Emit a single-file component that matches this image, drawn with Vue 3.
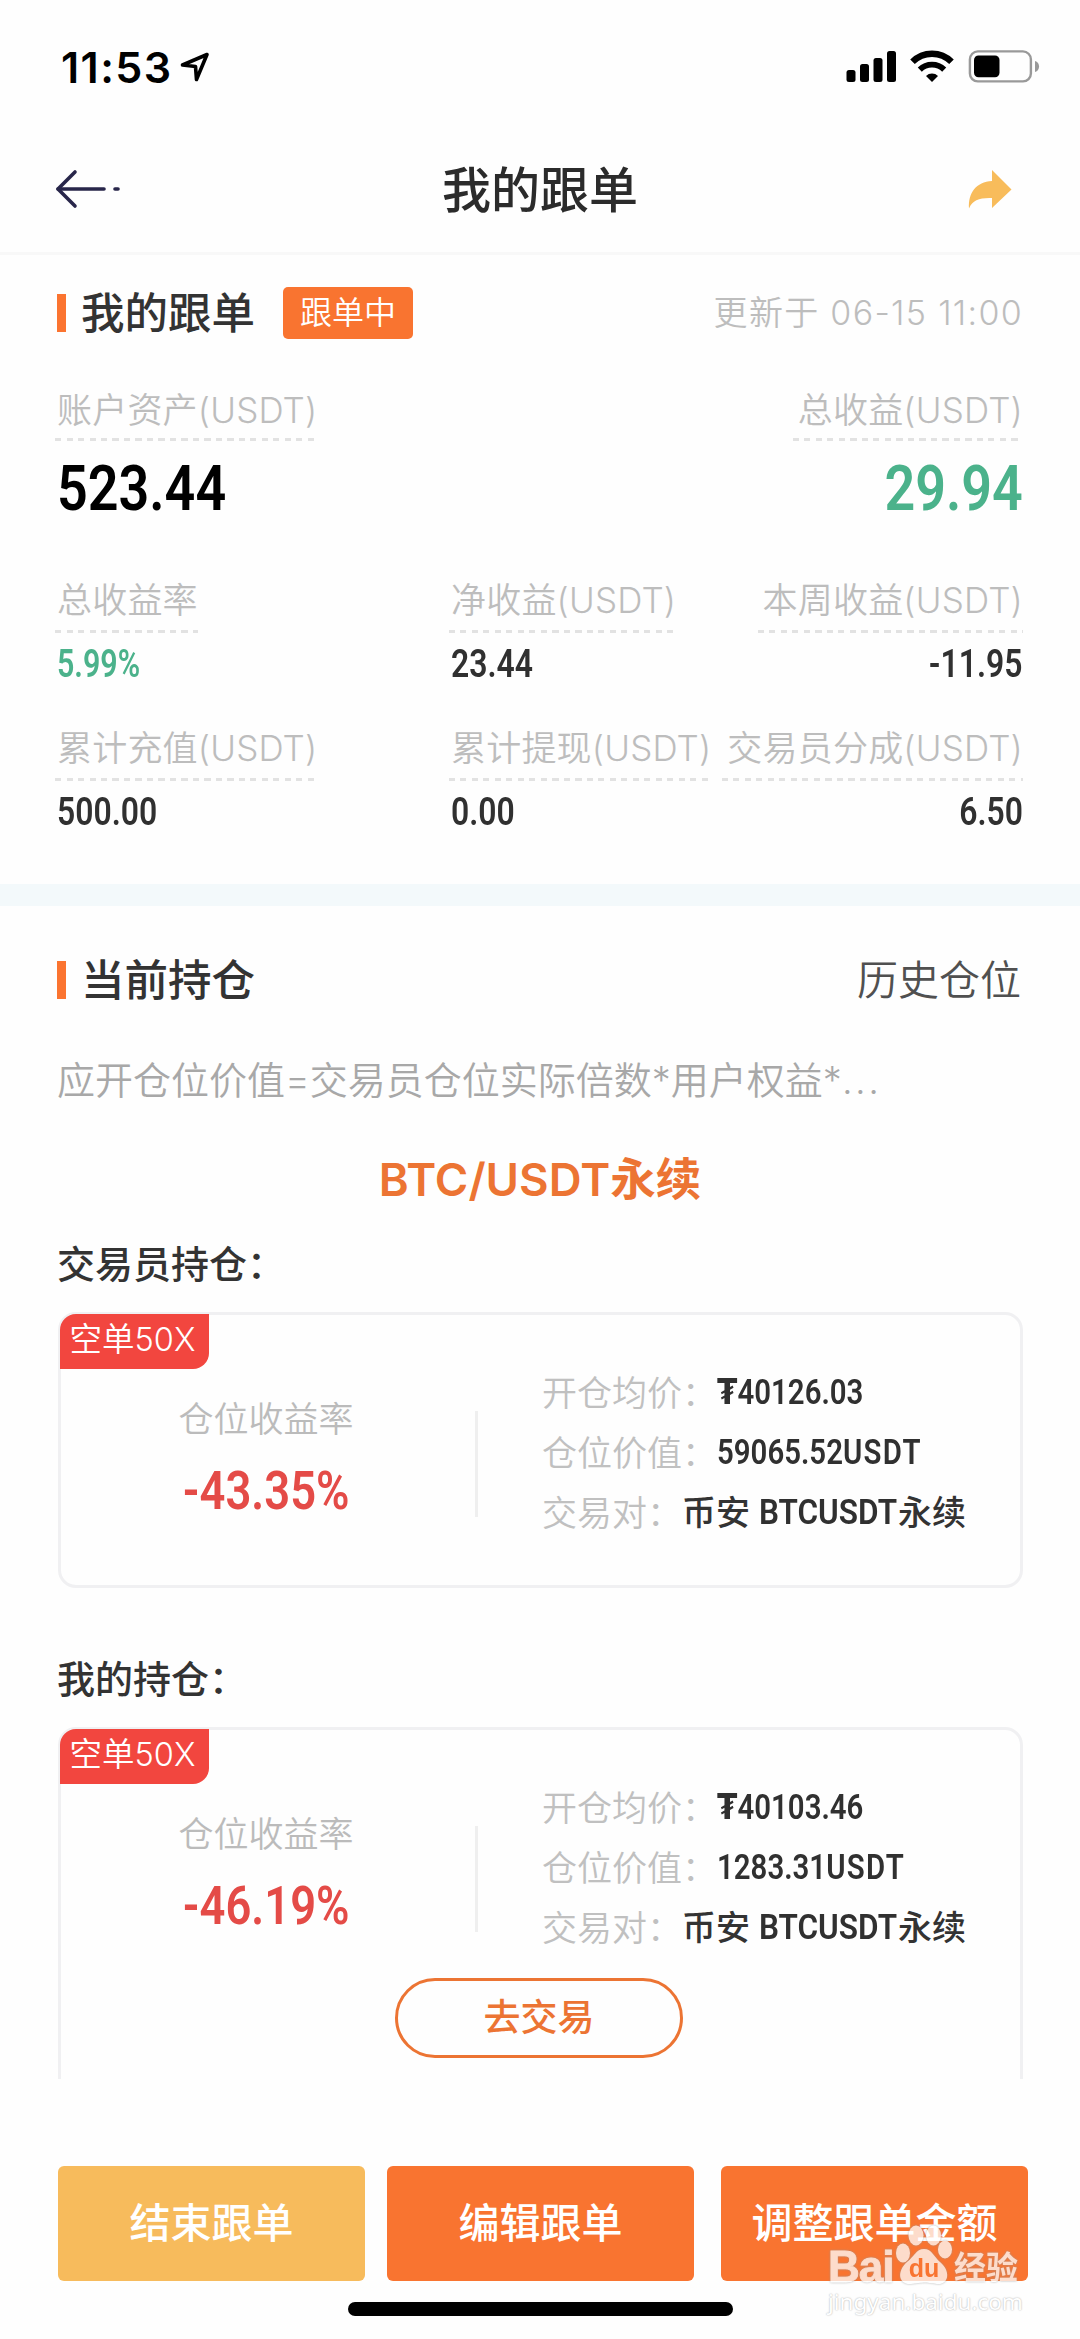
<template>
  <div class="page">
    <div class="status">
      <div class="clock">
        <span class="time">11:53</span>
        <svg class="loc" width="30" height="30" viewBox="0 0 30 30">
          <path d="M2.5 13 L27 2.500 L16.500 27.500 L15.500 14.500 Z" fill="none" stroke="#000" stroke-width="3.6" stroke-linejoin="round" />
        </svg>
      </div>
      <svg class="sys" width="194" height="34" viewBox="0 0 194 34">
        <rect x="0.5" y="20" width="9" height="12" rx="2.5" />
        <rect x="14" y="14" width="9" height="18" rx="2.5" />
        <rect x="27.5" y="8" width="9" height="24" rx="2.5" />
        <rect x="41" y="1" width="9" height="31" rx="2.5" />
        <path d="M66.5 11.8 A27.5 27.5 0 0 1 105.5 11.8" fill="none" stroke="#000" stroke-width="6.4" />
        <path d="M73.8 19.6 A17.5 17.5 0 0 1 98.2 19.6" fill="none" stroke="#000" stroke-width="5.8" />
        <path d="M86 32 L80 26 A8.6 8.6 0 0 1 92 26 Z" />
        <rect x="123.9" y="1.4" width="61" height="30" rx="8" fill="none" stroke="#999" stroke-width="2.4" />
        <rect x="128" y="5.5" width="25.5" height="21.8" rx="4.5" />
        <path d="M189 11 C194.4 12.4 194.4 20.6 189 22 Z" fill="#999" />
      </svg>
    </div>

    <header class="nav">
      <svg width="68" height="40" viewBox="0 0 68 40" fill="none" stroke="#28264a" stroke-width="3.6" stroke-linecap="round" stroke-linejoin="round">
        <path d="M20 3 L3 20 L20 37" />
        <path d="M3 20 H49" />
        <path d="M60 20 H63" />
      </svg>
      <h1>我的跟单</h1>
      <svg class="share" width="44" height="40" viewBox="0 0 44 40" fill="#f8bc5b">
        <path d="M24 1 L43.5 20.5 L24 39 V29 C12 28.5 4.500 31 1 39.500 C0 24 8 13 24 12 Z" />
      </svg>
    </header>

    <section class="summary">
      <div class="heading">
        <i class="bar"></i>
        <h2>我的跟单</h2>
        <span class="tag">跟单中</span>
        <span class="updated">更新于 06-15 11:00</span>
      </div>

      <div class="totals">
        <div v-for="t in totals" :key="t.label" class="stat">
          <span class="label">{{ t.label }}</span>
          <b class="din big" :class="t.tone">{{ t.value }}</b>
        </div>
      </div>

      <div class="stats">
        <div v-for="s in stats" :key="s.label" class="stat">
          <span class="label">{{ s.label }}</span>
          <b class="din" :class="s.tone">{{ s.value }}</b>
        </div>
      </div>
    </section>

    <section class="positions">
      <div class="heading">
        <i class="bar"></i>
        <h2>当前持仓</h2>
        <span class="history">历史仓位</span>
      </div>
      <p class="formula">应开仓位价值=交易员仓位实际倍数*用户权益*<span class="dots">...</span></p>
      <h3 class="pair">BTC/USDT永续</h3>

      <template v-for="p in positions" :key="p.owner">
        <h4 class="owner">{{ p.owner }}</h4>
        <div class="card" :class="{ open: p.tradable }">
          <span class="side">空单50X</span>
          <div class="cardBody">
            <div class="rate">
              <span class="rateLabel">仓位收益率</span>
              <b class="din">{{ p.rate }}</b>
            </div>
            <div class="split"></div>
            <div class="info">
              <div><span class="key">开仓均价：</span><b class="din">₮{{ p.price }}</b></div>
              <div><span class="key">仓位价值：</span><b class="din">{{ p.value }}<i class="unit">USDT</i></b></div>
              <div><span class="key">交易对：</span><b class="cjk">币安</b><b class="din symbol">BTCUSDT</b><b class="cjk">永续</b></div>
            </div>
          </div>
          <button v-if="p.tradable" class="trade">去交易</button>
        </div>
      </template>
    </section>

    <footer class="actions">
      <button class="act soft">结束跟单</button>
      <button class="act">编辑跟单</button>
      <button class="act">调整跟单金额</button>
    </footer>
    <div class="home"></div>

    <div class="watermark">
      <div class="wmRow">
        <span class="wmBai">Bai</span>
        <span class="paw">
          <svg width="58" height="62" viewBox="0 0 58 62" fill="#fff">
            <ellipse cx="8" cy="29" rx="7" ry="9.500" />
            <ellipse cx="21" cy="11.500" rx="7.500" ry="10" />
            <ellipse cx="38.500" cy="11.500" rx="7.500" ry="10" />
            <ellipse cx="50" cy="25.500" rx="7" ry="9" />
            <path d="M29 25 C37 25 39 33 45 38 C56 47 54 61 42 60 C36 59 33 58.500 29 58.500 C25 58.500 21 59.500 16 60 C4 61 1 48 12 38 C19 33 21 25 29 25 Z" />
          </svg>
          <em>du</em>
        </span>
        <span class="wmCn">经验</span>
      </div>
      <div class="wmUrl">jingyan.baidu.com</div>
    </div>
  </div>
</template>

<script setup>
const totals = [
  { label: '账户资产(USDT)', value: '523.44', tone: 'black' },
  { label: '总收益(USDT)', value: '29.94', tone: 'green' },
]

const stats = [
  { label: '总收益率', value: '5.99%', tone: 'green percent' },
  { label: '净收益(USDT)', value: '23.44' },
  { label: '本周收益(USDT)', value: '-11.95' },
  { label: '累计充值(USDT)', value: '500.00' },
  { label: '累计提现(USDT)', value: '0.00' },
  { label: '交易员分成(USDT)', value: '6.50' },
]

const positions = [
  { owner: '交易员持仓：', rate: '-43.35%', price: '40126.03', value: '59065.52', tradable: false },
  { owner: '我的持仓：', rate: '-46.19%', price: '40103.46', value: '1283.31', tradable: true },
]
</script>

<style>
html, body { margin: 0; background: #fefefe; }
</style>

<style scoped>
* { box-sizing: border-box; }

.page {
  position: relative;
  width: 1080px;
  height: 2339px;
  overflow: hidden;
  background: #fefefe;
  color: #333;
  font-family: Inter, "Noto Sans CJK SC", sans-serif;
  white-space: nowrap;
}

h1, h2, h3, h4, p { margin: 0; font-weight: 500; }
svg { display: block; flex: none; }
button { font-family: inherit; padding: 0; }

.status {
  height: 134px;
  padding: 0 40px 0 61px;
  display: flex;
  align-items: center;
  justify-content: space-between;
}
.clock { display: flex; align-items: center; gap: 8px; }
.time { font-size: 43px; font-weight: 600; line-height: 50px; letter-spacing: 1.4px; color: #000; }

.nav {
  height: 121px;
  padding: 0 55px 9px;
  display: grid;
  grid-template-columns: 1fr auto 1fr;
  align-items: center;
  border-bottom: 3px solid #f8f8f8;
}
.nav h1 { font-size: 49px; line-height: 60px; padding-top: 4px; color: #2b2b2b; }
.share { justify-self: end; margin-right: 13px; }

.heading { height: 54px; display: flex; align-items: center; }
.bar { width: 9px; height: 38px; background: #fb7430; }
.heading h2 { font-size: 43.500px; line-height: 54px; margin-left: 15px; }
.tag {
  width: 130px;
  height: 52px;
  margin-left: 28px;
  border-radius: 5px;
  background: #f97430;
  color: #fff;
  font-size: 32px;
  font-weight: 350;
  line-height: 51px;
  text-align: center;
}
.updated { margin-left: auto; font-size: 34px; font-weight: 350; line-height: 54px; letter-spacing: 1.3px; color: #bdbdbd; }

.summary { padding: 31px 57px 0; height: 629px; }

.din {
  display: inline-block;
  font-family: Roboto, "DejaVu Sans", sans-serif;
  font-weight: 600;
  font-size: 38px;
  line-height: 40px;
  color: #303030;
  transform: scaleX(0.84);
  transform-origin: left center;
}
.din.green { color: #4bb28b; }
.din.black { color: #000; }
.din.big { font-size: 63px; line-height: 60px; margin-top: 18px; transform: scaleX(0.855); }
.din.percent { transform: scaleX(0.8); }

.stat { display: flex; flex-direction: column; align-items: flex-start; }
.label {
  font-size: 35px;
  font-weight: 350;
  line-height: 48px;
  letter-spacing: 0.2px;
  color: #bdbdbd;
}
.label::after {
  content: "";
  display: block;
  height: 3px;
  margin: 6px 0 0 -2px;
  background: repeating-linear-gradient(90deg, #e2e2e2 0 6px, transparent 6px 11.500px);
}
.totals { display: flex; justify-content: space-between; margin-top: 46px; }
.totals .label::after { margin-top: 4px; }
.totals .stat:last-child, .stats .stat:nth-child(3n) { align-items: flex-end; }
.totals .stat:last-child .din, .stats .stat:nth-child(3n) .din { transform-origin: right center; }
.totals .stat:last-child .label::after, .stats .stat:nth-child(3n) .label::after { margin-left: -5px; }

.stats {
  display: grid;
  grid-template-columns: 394px 266px 306px;
  row-gap: 40px;
  margin-top: 57px;
}
.stats .din { margin-top: 11px; }

.positions {
  height: 1195px;
  padding: 47px 57px 0;
  border-top: 22px solid #f3f9fb;
  overflow: hidden;
}
.history { margin-left: auto; margin-right: 2px; font-size: 41px; font-weight: 350; line-height: 54px; color: #505050; }
.formula { margin-top: 48px; font-size: 38px; line-height: 50px; font-weight: 350; color: #a8a8a8; }
.dots { letter-spacing: 2.500px; }
.pair { margin-top: 45px; font-size: 45.500px; font-weight: 600; line-height: 60px; color: #ec7433; text-align: center; }
.owner { margin-top: 29px; font-size: 38px; line-height: 50px; }

.card {
  position: relative;
  height: 276px;
  margin: 23px 0 0 1px;
  border: 3px solid #f0f0f2;
  border-radius: 18px;
}
.card + .owner { margin-top: 66px; }
.card.open { height: 400px; }
.side {
  position: absolute;
  left: -1px;
  top: -1px;
  width: 149px;
  height: 55px;
  padding-right: 4px;
  border-radius: 16px 0 16px 0;
  background: #f2463f;
  color: #fff;
  font-size: 32.500px;
  font-weight: 350;
  line-height: 51px;
  text-align: center;
}
.cardBody { display: flex; padding-top: 48px; }
.rate { width: 410px; margin-right: 4px; display: flex; flex-direction: column; align-items: center; padding-top: 31px; }
.rateLabel { font-size: 35px; line-height: 50px; font-weight: 350; color: #bbb; }
.rate .din { margin-top: 17px; font-size: 54px; line-height: 60px; color: #e44b47; transform-origin: center; }
.split { width: 3px; height: 106px; margin-top: 48px; background: #efefef; }
.info { margin-left: 64px; }
.info div { height: 60px; display: flex; align-items: center; font-size: 35px; line-height: 60px; }
.key { font-weight: 350; color: #c0c0c0; }
.info .din { font-size: 35px; }
.unit { font-style: normal; letter-spacing: 1.6px; }
.cjk { font-size: 34px; font-weight: 500; }
.info .symbol { width: 138px; margin: 0 1px 0 9px; transform: scaleX(0.9); }

.trade {
  display: block;
  width: 288px;
  height: 80px;
  margin: 20px 0 0 334px;
  border: 3px solid #ec7433;
  border-radius: 40px;
  background: none;
  color: #ec7433;
  font-size: 37px;
  font-weight: 500;
  line-height: 72px;
}

.actions { display: flex; gap: 22px; padding: 87px 52px 0 58px; }
.act {
  flex: 0 0 307px;
  height: 115px;
  padding-bottom: 1px;
  border: 0;
  border-radius: 6px;
  background: #f97430;
  color: #fff;
  font-size: 41px;
  font-weight: 500;
  line-height: 114px;
}
.act.soft { background: #f7bb5c; }
.act:last-child { margin-left: 5px; }
.home { width: 385px; height: 14px; margin: 21px auto 0; border-radius: 7px; background: #000; }

.watermark { position: absolute; left: 828px; top: 2224px; width: 194px; color: #fff; }
.wmRow { display: flex; align-items: flex-end; height: 62px; opacity: 0.75; filter: drop-shadow(0 0 1px #999); }
.wmBai { width: 67px; font: bold 44px/44px "Liberation Sans", sans-serif; letter-spacing: -1px; height: 41px; -webkit-text-stroke: 0.8px #fff; }
.paw { position: relative; width: 58px; height: 62px; }
.paw em {
  position: absolute;
  left: 0;
  right: 0;
  top: 30px;
  font: bold 25px/28px "Liberation Sans", sans-serif;
  text-align: center;
  color: #f97430;
}
.wmCn { font-size: 32px; font-weight: 700; line-height: 36px; margin-left: 1px; }
.wmUrl {
  font: 22.500px/30px "Noto Sans", sans-serif;
  margin-top: 1px;
  text-shadow: 0 0 2px #bbb, 0 0 1px #ccc;
}
</style>
